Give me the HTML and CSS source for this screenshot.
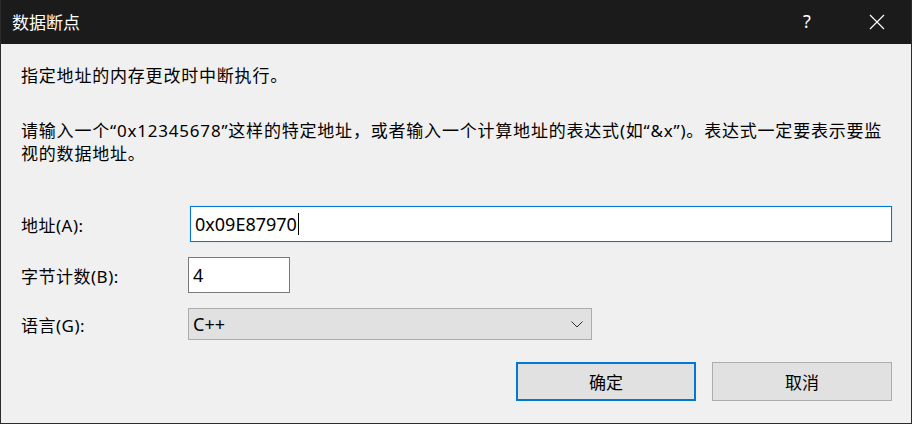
FILE: index.html
```html
<!DOCTYPE html>
<html lang="zh-CN">
<head>
<meta charset="utf-8">
<title>数据断点</title>
<link rel="stylesheet" href="styles.css">
</head>
<body>
<div class="window">
  <div class="titlebar">
    <span class="title">数据断点</span>
    <div class="caption-buttons">
      <span class="help">?</span>
      <span class="close">
        <svg width="16" height="16" viewBox="0 0 16 16"><path d="M1 1 L15 15 M15 1 L1 15" stroke="#ffffff" stroke-width="1.2" fill="none"/></svg>
      </span>
    </div>
  </div>
  <div class="content">
    <p class="desc first">指定地址的内存更改时中断执行。</p>
    <p class="desc">请输入一个“0x12345678”这样的特定地址，或者输入一个计算地址的表达式(如“&amp;x”)。表达式一定要表示要监视的数据地址。</p>
    <div class="form">
      <label class="label">地址(A):</label>
      <div class="field address"><span class="value">0x09E87970</span><span class="caret"></span></div>
      <label class="label">字节计数(B):</label>
      <div class="field count"><span class="value">4</span></div>
      <label class="label">语言(G):</label>
      <div class="select">
        <span class="value">C++</span>
        <svg class="chevron" width="12" height="7" viewBox="0 0 12 7"><path d="M0.5 0.5 L6 6 L11.5 0.5" stroke="#333" stroke-width="1" fill="none"/></svg>
      </div>
    </div>
    <div class="buttons">
      <button class="btn primary">确定</button>
      <button class="btn">取消</button>
    </div>
  </div>
</div>
</body>
</html>
```

FILE: styles.css
```css
* { box-sizing: border-box; }
html, body { margin: 0; padding: 0; }
body {
  width: 912px;
  height: 424px;
  overflow: hidden;
  font-family: "Noto Sans", "Noto Sans CJK SC", sans-serif;
  background: #1b1b1b;
}
.window {
  width: 912px;
  height: 424px;
  display: flex;
  flex-direction: column;
  border: 1px solid #2b2b2b;
  border-top: none;
  background: #f0f0f0;
}
.titlebar {
  height: 44px;
  flex: none;
  background: #1b1b1b;
  display: flex;
  align-items: center;
  justify-content: space-between;
  padding-left: 11px;
  color: #ffffff;
}
.title {
  font-size: 17px;
  font-family: "Noto Sans CJK SC", sans-serif;
  margin-top: -2px;
}
.caption-buttons {
  display: flex;
  align-items: center;
  height: 100%;
}
.help {
  width: 46px;
  text-align: center;
  font-size: 18px;
  margin-right: 24px;
  margin-top: -2px;
  font-family: "Noto Sans", sans-serif;
}
.close {
  width: 46px;
  height: 100%;
  display: flex;
  align-items: center;
  justify-content: center;
  margin-right: 11px;
}
.content {
  flex: 1;
  padding: 0 19px 0 20px;
  color: #000;
}
.desc {
  margin: 0;
  font-size: 17px;
  line-height: 23px;
  letter-spacing: 0.8px;
}
.desc.first {
  margin-top: 20px;
  margin-bottom: 32px;
}
.form {
  margin-top: 41px;
  display: grid;
  grid-template-columns: 167px 1fr;
  row-gap: 15px;
  align-items: center;
  font-size: 17px;
}
.label {
  padding-left: 0;
  letter-spacing: 0.5px;
}
.field {
  height: 36px;
  background: #ffffff;
  display: flex;
  align-items: center;
  padding-left: 4px;
  font-size: 18px;
}
.address {
  margin-left: 2px;
  margin-right: 0;
  width: 702px;
  border: 1px solid #0078d7;
  box-shadow: 0 0 0 1px #dde9f4;
}
.caret {
  display: inline-block;
  width: 1px;
  height: 22px;
  background: #000;
  margin-left: 1px;
}
.count {
  width: 102px;
  border: 1px solid #7a7a7a;
}
.select {
  width: 404px;
  height: 32px;
  background: #e1e1e1;
  border: 1px solid #adadad;
  display: flex;
  align-items: center;
  justify-content: space-between;
  padding: 0 8px 0 4px;
  font-size: 18px;
}
.chevron { margin-top: 1px; }
.buttons {
  margin-top: 22px;
  display: flex;
  justify-content: flex-end;
  gap: 16px;
  padding-right: 0;
}
.btn {
  width: 180px;
  height: 39px;
  background: #e1e1e1;
  border: 1px solid #adadad;
  font-family: "Noto Sans CJK SC", sans-serif;
  font-size: 17px;
  color: #000;
  padding: 0;
  margin: 0;
}
.btn.primary {
  border: 2px solid #0078d7;
}
```
